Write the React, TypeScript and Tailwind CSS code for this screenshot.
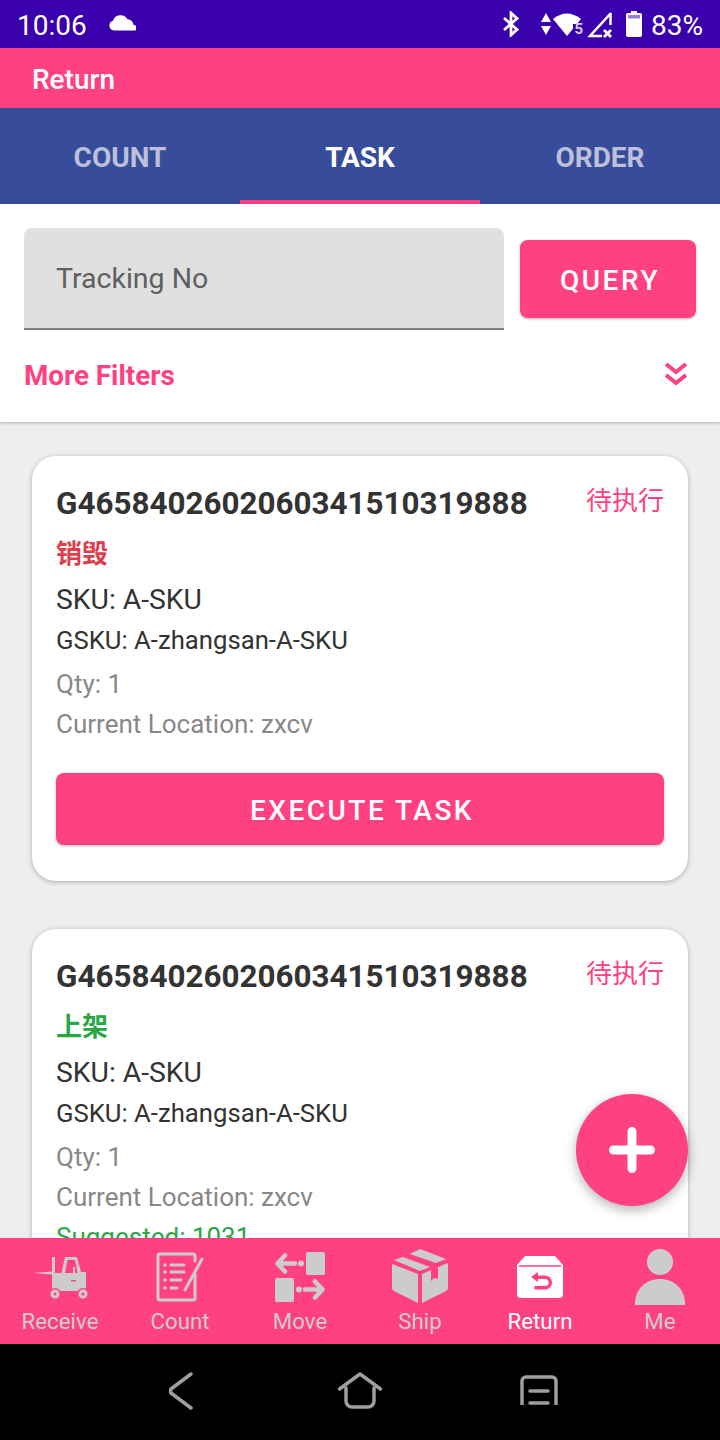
import React from 'react';

const PINK = 'bg-[#ff4081]';

const tasks = [
    {id: 'a', type: '销毁', typeClass: 'text-[#e03c4c]', suggested: false},
    {id: 'b', type: '上架', typeClass: 'text-[#28a745]', suggested: true},
];

const Forklift = () => (
    <svg width="56" height="44" viewBox="0 0 56 44" fill="#cccccc">
        <path d="M1 18 L20 16.500 V19.500 Z"/>
        <path fillRule="evenodd" d="M20 2h3v16h6.500L33 2H45L49 17H54V36H20zM35.500 5 L33 18H45.500L43 5z"/>
        <path d="M41 12h2v6h-2z"/>
        <path d="M39 25h5v1.500h-5z" fill="#ff4081"/>
        <circle cx="23" cy="39" r="6" fill="#ff4081"/>
        <circle cx="51" cy="39" r="6" fill="#ff4081"/>
        <circle cx="23" cy="39" r="3" fill="none" stroke="#cccccc" strokeWidth="3"/>
        <circle cx="51" cy="39" r="3" fill="none" stroke="#cccccc" strokeWidth="3"/>
    </svg>
);

const CountIcon = () => (
    <svg width="48" height="50" viewBox="0 0 48 50" fill="none" stroke="#cccccc" strokeWidth="3" strokeLinecap="round">
        <path d="M39 9V4a2 2 0 0 0-2-2H4a2 2 0 0 0-2 2v42a2 2 0 0 0 2 2h33a2 2 0 0 0 2-2V22"/>
        <path d="M15 13h13M15 20h13M15 28h10M15 36h6" strokeWidth="2.800"/>
        <circle cx="9" cy="13" r="1.800" fill="#cccccc" stroke="none"/>
        <circle cx="9" cy="20" r="1.800" fill="#cccccc" stroke="none"/>
        <circle cx="9" cy="28" r="1.800" fill="#cccccc" stroke="none"/>
        <circle cx="9" cy="36" r="1.800" fill="#cccccc" stroke="none"/>
        <path d="M46 7 L29 38" strokeWidth="3"/>
    </svg>
);

const MoveIcon = () => (
    <svg width="50" height="50" viewBox="0 0 50 50" fill="none" stroke="#cccccc" strokeWidth="4.500" strokeLinecap="round" strokeLinejoin="round">
        <rect x="31" y="0" width="19" height="23" rx="2" fill="#cccccc" stroke="none"/>
        <rect x="0" y="26" width="19" height="24" rx="2" fill="#cccccc" stroke="none"/>
        <path d="M20 11.500H3 M10 3.500 L2.500 11.500 L10 19.500"/>
        <circle cx="26" cy="11.500" r="3" fill="#cccccc" stroke="none"/>
        <circle cx="24" cy="37.500" r="3" fill="#cccccc" stroke="none"/>
        <path d="M30 37.500H47 M40 29.500 L47.500 37.500 L40 45.500"/>
    </svg>
);

const ShipIcon = () => (
    <svg width="56" height="56" viewBox="0 0 56 56" fill="#cccccc">
        <path d="M18 5 L28 0 L54 10 L44 14z"/>
        <path d="M11 8 L38 18 L28 22 L2 11z"/>
        <path d="M0 15 L26 25 V54 L2 42 Q0 41 0 39z"/>
        <path d="M30 25 L39 21 V32 L42 29 L46 30 V18 L56 14 V39 Q56 41 54 42 L30 54z"/>
    </svg>
);

const ReturnIcon = () => (
    <svg width="46" height="42" viewBox="0 0 46 42">
        <path d="M8 0H38L46 9V38a4 4 0 0 1-4 4H4a4 4 0 0 1-4-4V9z" fill="#ffffff"/>
        <path d="M2 10H44" stroke="#ff4081" strokeWidth="1.500"/>
        <path d="M14 21 L21 16V19.500H28a6 6 0 0 1 0 14H17.500V30H28a2.500 2.500 0 0 0 0-7H21V26z" fill="#ff4081"/>
    </svg>
);

const MeIcon = () => (
    <svg width="50" height="56" viewBox="0 0 50 56" fill="#cccccc">
        <circle cx="25" cy="13" r="13"/>
        <path d="M0 56 V55 C0 40 11 30 25 30 C39 30 50 40 50 55 V56z"/>
    </svg>
);

const navItems = [
    {label: 'Receive', icon: <Forklift/>, active: false},
    {label: 'Count', icon: <CountIcon/>, active: false},
    {label: 'Move', icon: <MoveIcon/>, active: false},
    {label: 'Ship', icon: <ShipIcon/>, active: false},
    {label: 'Return', icon: <ReturnIcon/>, active: true},
    {label: 'Me', icon: <MeIcon/>, active: false},
];

const StatusBar = () => (
    <div className="h-12 shrink-0 bg-[#3a00ae] flex items-center pl-[17px] pr-[17px] text-white">
        <span className="mt-1 text-[28px] leading-none">10:06</span>
        <svg className="ml-[21px] -mt-0.5" width="28" height="16" viewBox="0 0 28 16" fill="#ffffff">
            <path d="M6 15.500a5 5 0 0 1-1-9.800 8 8 0 0 1 14.500-1.500 6.500 6.500 0 0 1 6 5.800 3 3 0 0 1 1.800 5.500z"/>
        </svg>
        <div className="ml-auto flex items-center">
            <svg width="18" height="26" viewBox="0 0 18 26" fill="none" stroke="#ffffff" strokeWidth="2.800">
                <path d="M2 7 L15 18.500 L9 24 V2 L15 7.500 L2 19"/>
            </svg>
            <svg className="ml-[21px]" width="10" height="22" viewBox="0 0 10 22" fill="#ffffff">
                <path d="M5 0 L10 9H0zM0 13H10L5 22z"/>
            </svg>
            <svg className="ml-0.5 mt-[2px]" width="30" height="26" viewBox="0 0 30 26" fill="#ffffff">
                <path d="M0 7 Q14 -4 28 7 L14 24z"/>
                <rect x="20" y="12" width="10" height="14" fill="#3a00ae"/>
            </svg>
            <span className="-ml-[9px] mt-[11px] text-[15px] leading-none font-bold text-[#d8ccf0]">5</span>
            <svg className="ml-1 mt-[2px]" width="26" height="26" viewBox="0 0 26 26" fill="none" stroke="#ffffff" strokeWidth="2.500">
                <path d="M24 1 L3 24H15"/>
                <path d="M23.500 1V13"/>
                <path d="M17 18 L24 25 M24 18 L17 25" strokeWidth="2.800"/>
            </svg>
            <svg className="ml-[13px]" width="16" height="26" viewBox="0 0 16 26" fill="#ffffff">
                <path d="M5 0h6v2h3a2 2 0 0 1 2 2v20a2 2 0 0 1-2 2H2a2 2 0 0 1-2-2V4a2 2 0 0 1 2-2h3z"/>
                <rect x="2" y="4" width="12" height="3.500" fill="#3a00ae" opacity="0.500"/>
            </svg>
            <span className="ml-[9px] mt-1 text-[28px] leading-none">83%</span>
        </div>
    </div>
);

const TaskCard = ({type, typeClass, suggested}: { type: string; typeClass: string; suggested: boolean }) => (
    <div className="shrink-0 mx-8 mb-12 rounded-[24px] bg-white px-6 pt-6 pb-9 shadow-[0_1px_5px_rgba(0,0,0,0.28)]">
        <div className="flex items-start justify-between">
            <span className="text-[31.4px] leading-[48px] font-bold text-[#333333]">G4658402602060341510319888</span>
            <span className="text-[26px] leading-[42px] text-[#ff4081]">待执行</span>
        </div>
        <div className={`mt-[3px] text-[26px] leading-[46px] font-bold ${typeClass}`}>{type}</div>
        <div className="mt-[3px] text-[28.3px] leading-[40px] text-[#333333]">SKU: A-SKU</div>
        <div className="text-[25.7px] leading-[40px] text-[#333333]">GSKU: A-zhangsan-A-SKU</div>
        <div className="mt-1 text-[26px] leading-[40px] text-[#888888]">Qty: 1</div>
        <div className="text-[26px] leading-[40px] text-[#888888]">Current Location: zxcv</div>
        {suggested
            ? <div className="text-[26px] leading-[40px] text-[#28a745]">Suggested: 1031</div>
            : null}
        <button
            className={`mt-[29px] w-full h-[72px] rounded-lg ${PINK} pl-1 pt-1 text-white text-[28px] font-medium tracking-[2.500px] shadow-[0_1px_3px_rgba(0,0,0,0.3)]`}>
            EXECUTE TASK
        </button>
    </div>
);

export default function App() {
    return (
        <div className="relative w-[720px] h-[1440px] flex flex-col overflow-hidden bg-[#eeeeee] font-['Roboto','Noto_Sans_CJK_SC',sans-serif]">
            <StatusBar/>

            <div className={`h-[60px] shrink-0 ${PINK} flex items-center px-8 pt-[3px] text-white text-[28px] font-medium`}>
                Return
            </div>

            <div className="h-24 shrink-0 bg-[#374c9b] flex text-[28px] font-bold">
                <div className="flex-1 flex items-center justify-center text-[#bcc0d8] pt-1">COUNT</div>
                <div className="flex-1 flex items-center justify-center text-white border-b-4 border-[#ff4081] pt-2">TASK</div>
                <div className="flex-1 flex items-center justify-center text-[#bcc0d8] pt-1">ORDER</div>
            </div>

            <div className="h-[218px] shrink-0 bg-white px-6 pt-6 shadow-[0_1px_3px_rgba(0,0,0,0.25)] z-10">
                <div className="flex items-center gap-4">
                    <div className="flex-1 h-[102px] rounded-t-lg bg-[#e0e0e0] border-b-2 border-[#808080] flex items-center px-8 pt-[2px] text-[28.5px] text-[#5f5f5f]">
                        Tracking No
                    </div>
                    <button
                        className={`w-[176px] h-[78px] rounded-lg ${PINK} pl-1 pt-1 text-white text-[28px] font-medium tracking-[2.500px] shadow-[0_1px_3px_rgba(0,0,0,0.3)]`}>
                        QUERY
                    </button>
                </div>
                <div className="mt-[22px] flex items-center justify-between pr-[9px]">
                    <span className="text-[27.8px] leading-[48px] font-bold text-[#ff4081]">More Filters</span>
                    <svg className="-mt-1" width="22" height="24" viewBox="0 0 22 24" fill="none" stroke="#ff4081" strokeWidth="4">
                        <path d="M1 2 L11 10 L21 2"/>
                        <path d="M1 13 L11 21 L21 13"/>
                    </svg>
                </div>
            </div>

            <div className="flex-1 min-h-0 overflow-hidden flex flex-col pt-[34px]">
                {tasks.map((t) => (
                    <TaskCard key={t.id} type={t.type} typeClass={t.typeClass} suggested={t.suggested}/>
                ))}
            </div>

            <div className={`h-[106px] shrink-0 ${PINK} grid grid-cols-6 pt-[5px]`}>
                {navItems.map((item) => (
                    <div key={item.label} className="flex flex-col items-center">
                        <div className="h-[67px] flex items-center justify-center">{item.icon}</div>
                        <span className={`text-[22.3px] leading-[22px] ${item.active ? 'text-white' : 'text-[#cccccc]'}`}>
                            {item.label}
                        </span>
                    </div>
                ))}
            </div>

            <div className="h-24 shrink-0 bg-black flex items-center justify-center pb-[2px]">
                <div className="w-[536px] grid grid-cols-3 justify-items-center items-center">
                    <svg width="24" height="38" viewBox="0 0 24 38" fill="none" stroke="#9e9e9e" strokeWidth="3.500" strokeLinecap="round" strokeLinejoin="round">
                        <path d="M22 2 L2 17 Q1 19 2 21 L22 36"/>
                    </svg>
                    <svg width="44" height="38" viewBox="0 0 44 38" fill="none" stroke="#9e9e9e" strokeWidth="3.500" strokeLinecap="round" strokeLinejoin="round">
                        <path d="M1.500 17 L22 2 L42.500 17"/>
                        <path d="M8 16V29a6 6 0 0 0 6 6H30a6 6 0 0 0 6-6V16"/>
                    </svg>
                    <svg width="38" height="32" viewBox="0 0 38 32" fill="none" stroke="#9e9e9e" strokeWidth="3.500">
                        <path d="M2 30V6a4 4 0 0 1 4-4H32a4 4 0 0 1 4 4V30"/>
                        <path d="M10 16H28M10 28H28" strokeLinecap="round"/>
                    </svg>
                </div>
            </div>

            <button className={`absolute left-[576px] top-[1094px] w-28 h-28 rounded-full ${PINK} flex items-center justify-center shadow-[0_4px_12px_rgba(0,0,0,0.3)]`}>
                <svg width="46" height="46" viewBox="0 0 46 46" stroke="#ffffff" strokeWidth="9" strokeLinecap="round">
                    <path d="M23 4.500V41.500M4.500 23H41.500"/>
                </svg>
            </button>
        </div>
    );
}
